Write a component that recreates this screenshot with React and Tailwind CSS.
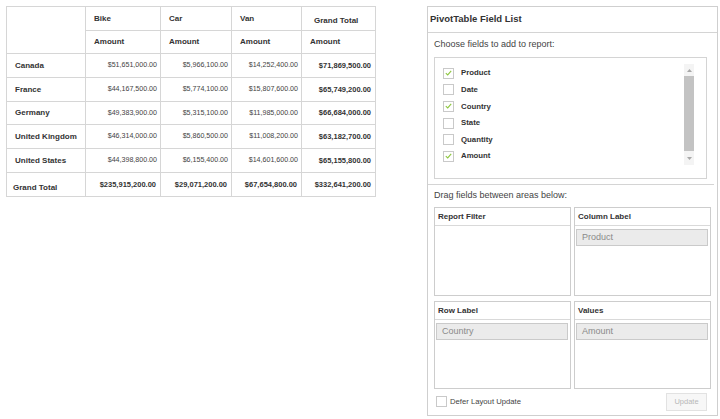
import React from 'react'

const font = { fontFamily: '"Liberation Sans", Arial, sans-serif' }

const cols = ['Bike', 'Car', 'Van']
const rows = [
  ['Canada', '$51,651,000.00', '$5,966,100.00', '$14,252,400.00', '$71,869,500.00'],
  ['France', '$44,167,500.00', '$5,774,100.00', '$15,807,600.00', '$65,749,200.00'],
  ['Germany', '$49,383,900.00', '$5,315,100.00', '$11,985,000.00', '$66,684,000.00'],
  ['United Kingdom', '$46,314,000.00', '$5,860,500.00', '$11,008,200.00', '$63,182,700.00'],
  ['United States', '$44,398,800.00', '$6,155,400.00', '$14,601,600.00', '$65,155,800.00'],
]
const totals = ['$235,915,200.00', '$29,071,200.00', '$67,654,800.00', '$332,641,200.00']
const rowH = ['h-[24px]', 'h-[24px]', 'h-[23px]', 'h-[24px]', 'h-[24px]']

const fields = [
  ['Product', true],
  ['Date', false],
  ['Country', true],
  ['State', false],
  ['Quantity', false],
  ['Amount', true],
]

const cell = 'border-r border-b border-[#d6d6d6] flex items-center'

function Check({ on }) {
  return (
    <div className="w-[11px] h-[11px] border border-[#c9c9c9] bg-white flex items-center justify-center">
      {on && (
        <svg width="7" height="6" viewBox="0 0 7 6">
          <path d="M0.8 3.2 L2.7 4.9 L6.2 0.9" fill="none" stroke="#8dc63f" strokeWidth="1.1" />
        </svg>
      )}
    </div>
  )
}

function Area({ title, item, h }) {
  return (
    <div className={`border border-[#cdcdcd] bg-white ${h}`}>
      <div className="h-[18px] border-b border-[#d9d9d9] flex items-center pl-[3px] text-[8px] font-bold text-[#333]">
        {title}
      </div>
      {item && (
        <div className="ml-px mr-[2px] mt-[3px] h-[17px] bg-[#ebebeb] border border-[#cacaca] flex items-center pl-[5px] text-[9px] text-[#8a8a8a]">
          {item}
        </div>
      )}
    </div>
  )
}

export default function App() {
  return (
    <div className="w-[720px] h-[419px] bg-white flex items-start pt-[6px] pl-[6px] text-[#333]" style={font}>
      <div className="grid grid-cols-[79px_75px_71px_70px_74px] border-l border-t border-[#d6d6d6] w-[370px]">
        <div className={`${cell} row-span-2`} />
        {cols.map(c => (
          <div key={c} className={`${cell} h-[24px] pl-[8px] text-[8px] font-bold`}>{c}</div>
        ))}
        <div className={`${cell} h-[24px] pl-[12px] pt-[5px] text-[8px] font-bold`}>Grand Total</div>
        {[0, 1, 2, 3].map(i => (
          <div key={i} className={`${cell} h-[23px] pl-[8px] text-[8px] font-bold`}>Amount</div>
        ))}
        {rows.map((r, ri) => (
          <React.Fragment key={r[0]}>
            <div className={`${cell} ${rowH[ri]} pl-[8px] text-[8px] font-bold`}>{r[0]}</div>
            {r.slice(1, 4).map((v, i) => (
              <div key={i} className={`${cell} ${rowH[ri]} justify-end pr-[3px] text-[7.1px] text-[#444]`}>{v}</div>
            ))}
            <div className={`${cell} ${rowH[ri]} justify-end pr-[4px] text-[7.5px] font-bold`}>{r[4]}</div>
          </React.Fragment>
        ))}
        <div className={`${cell} h-[24px] pl-[6px] pt-[6px] text-[8px] font-bold`}>Grand Total</div>
        {totals.map((v, i) => (
          <div key={i} className={`${cell} h-[24px] justify-end pr-[4px] text-[7.5px] font-bold`}>{v}</div>
        ))}
      </div>

      <div className="ml-[51px] w-[291px] h-[410px] border border-[#cfcfcf] bg-white flex flex-col">
        <div className="h-[26px] border-b border-[#d4d4d4] flex items-center pl-[2px] text-[9.5px] font-bold text-[#333]">
          PivotTable Field List
        </div>
        <div className="px-[6px]">
          <div className="h-[24px] flex items-center text-[9px] text-[#444]">Choose fields to add to report:</div>
          <div className="w-[273px] h-[122px] border border-[#d4d4d4] flex">
            <div className="flex-1 pl-[8px] pt-[7px] flex flex-col">
              {fields.map(([f, on]) => (
                <div key={f} className="h-[16.6px] flex items-center gap-[7px]">
                  <Check on={on} />
                  <span className="text-[7.8px] font-bold text-[#333]">{f}</span>
                </div>
              ))}
            </div>
            <div className="w-[10px] mr-[12px] mt-[6px] h-[101px] flex flex-col bg-[#f4f4f4]">
              <div className="h-[12px] flex items-center justify-center">
                <svg width="5" height="3" viewBox="0 0 5 3"><path d="M0 3 L2.5 0 L5 3 Z" fill="#a8a8a8" /></svg>
              </div>
              <div className="h-[75px] bg-[#c3c3c3]" />
              <div className="flex-1 flex items-center justify-center">
                <svg width="5" height="3" viewBox="0 0 5 3"><path d="M0 0 L2.5 3 L5 0 Z" fill="#a8a8a8" /></svg>
              </div>
            </div>
          </div>
        </div>
        <div className="mt-[5px] mr-[3px] h-px bg-[#d4d4d4]" />
        <div className="px-[6px]">
          <div className="h-[22px] flex items-center text-[9px] text-[#444]">Drag fields between areas below:</div>
          <div className="grid grid-cols-[137px_137px] gap-x-[3px] gap-y-[5px]">
            <Area title="Report Filter" h="h-[89px]" />
            <Area title="Column Label" item="Product" h="h-[89px]" />
            <Area title="Row Label" item="Country" h="h-[88px]" />
            <Area title="Values" item="Amount" h="h-[88px]" />
          </div>
          <div className="mt-[4px] flex items-center justify-between">
            <div className="flex items-center gap-[3px] pl-[2px]">
              <Check on={false} />
              <span className="text-[7.7px] text-[#444]">Defer Layout Update</span>
            </div>
            <div className="mr-[4px] w-[41px] h-[18px] border border-[#e2e2e2] bg-[#f7f7f7] flex items-center justify-center text-[7.5px] text-[#b8b8b8]">
              Update
            </div>
          </div>
        </div>
      </div>
    </div>
  )
}
